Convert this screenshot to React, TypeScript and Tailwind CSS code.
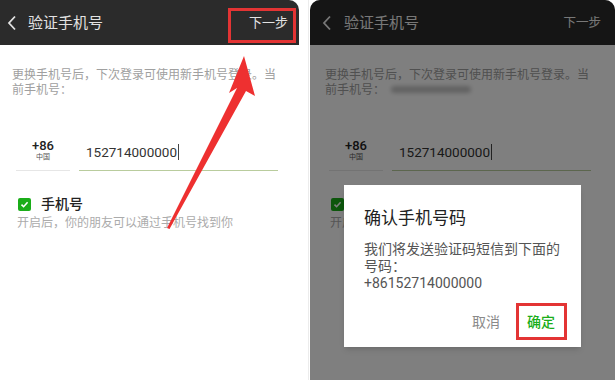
import React from 'react';

const font = { fontFamily: 'Roboto, "Noto Sans CJK SC", sans-serif' };

function Chevron() {
  return (
    <svg width="10" height="16" viewBox="0 0 10 16" className="shrink-0">
      <polyline points="8,1.5 2,8 8,14.5" fill="none" stroke="currentColor" strokeWidth="1.8" />
    </svg>
  );
}

function Phone({ blurNumber, pad }: { blurNumber?: boolean; pad: string }) {
  return (
    <div className={`flex flex-col ${pad}`}>
      <p className="w-[268px] pt-[23px] text-[12px] leading-[15px] text-[#a0a0a0]">
        更换手机号后，下次登录可使用新手机号登录。当前手机号：
        {blurNumber && <span className="ml-[6px] inline-block h-[7px] w-[80px] translate-y-[-1px] rounded-full bg-[#c4c4c4] blur-[2px]" />}
      </p>

      <div className="mt-[36px] flex gap-[9px] pl-[4px]">
        <div className="flex h-[37px] w-[54px] flex-col items-center border-b border-[#e6e6e6] pt-[4px]">
          <span className="text-[13px] leading-[15px] font-medium text-[#222]">+86</span>
          <span className="text-[7px] leading-[9px] text-[#555]">中国</span>
        </div>
        <div className="flex h-[37px] w-[199px] items-start border-b border-[#b9cc9d] pl-[7px] pt-[9px]">
          <span className="text-[13.5px] leading-[18px] text-[#333]">152714000000</span>
          <span className="ml-[1px] mt-[1px] h-[16px] w-px bg-[#444]" />
        </div>
      </div>

      <div className="mt-[25px] flex items-center gap-[10px] pl-[6px]">
        <span className="flex h-[13px] w-[13px] items-center justify-center rounded-[2px] bg-[#1aad19]">
          <svg width="9" height="9" viewBox="0 0 9 9">
            <polyline points="1.5,4.6 3.6,6.7 7.6,2.3" fill="none" stroke="#fff" strokeWidth="1.6" />
          </svg>
        </span>
        <span className="text-[14px] leading-[16px] font-medium text-[#222]">手机号</span>
      </div>
      <p className="mt-[4px] pl-[5px] text-[12px] leading-[15px] text-[#ababab]">开启后，你的朋友可以通过手机号找到你</p>
    </div>
  );
}

export default function App() {
  return (
    <div className="flex h-[380px] w-[615px] overflow-hidden bg-white" style={font}>
      {/* left screen */}
      <div className="relative h-full w-[309px] border-r border-[#ececec]">
        <div className="mr-[9px] flex h-[45px] items-center rounded-tr-[10px] bg-[#2b2b2b] pl-[7px] pr-[11px] text-[#e2e2e2]">
          <Chevron />
          <span className="ml-[11px] text-[15px] leading-[20px]">验证手机号</span>
          <span className="ml-auto text-[13px] leading-[16px]">下一步</span>
        </div>
        <Phone pad="pl-[12px]" />

        <div className="absolute left-[228px] top-[8px] h-[35px] w-[68px] border-[3px] border-[#e33434]" />
        <svg className="absolute left-0 top-0" width="309" height="380" viewBox="0 0 309 380">
          <polygon
            points="244,56 255,96 246,91 169.5,229 167,228 237,88 229,93"
            fill="#ee3030"
          />
        </svg>
      </div>

      {/* right screen */}
      <div className="relative ml-px h-full w-[305px]">
        <div className="flex h-[45px] items-center rounded-t-[10px] bg-[#2b2b2b] pl-[12px] pr-[14px] text-[#f0f0f0]">
          <Chevron />
          <span className="ml-[12px] text-[15px] leading-[20px]">验证手机号</span>
          <span className="ml-auto text-[12.5px] leading-[16px]">下一步</span>
        </div>
        <Phone pad="pl-[15px]" blurNumber />

        <div className="absolute inset-0 rounded-t-[10px] bg-black/50" />

        <div className="absolute left-[34px] top-[185px] h-[162px] w-[237px] bg-white pl-[20px] pt-[21px] shadow-md">
          <p className="text-[17px] leading-[24px] text-[#222]">确认手机号码</p>
          <p className="mt-[11px] w-[200px] text-[14px] leading-[17px] text-[#555]">
            我们将发送验证码短信到下面的号码：
            <br />
            +86152714000000
          </p>
          <div className="mt-[21px] flex justify-end gap-[27px] pr-[26px] text-[14px] leading-[18px]">
            <span className="text-[#8a8a8a]">取消</span>
            <span className="font-medium text-[#1aad19]">确定</span>
          </div>
          <div className="absolute left-[172px] top-[118px] h-[37px] w-[51px] border-[3px] border-[#e33434]" />
        </div>
      </div>
    </div>
  );
}
